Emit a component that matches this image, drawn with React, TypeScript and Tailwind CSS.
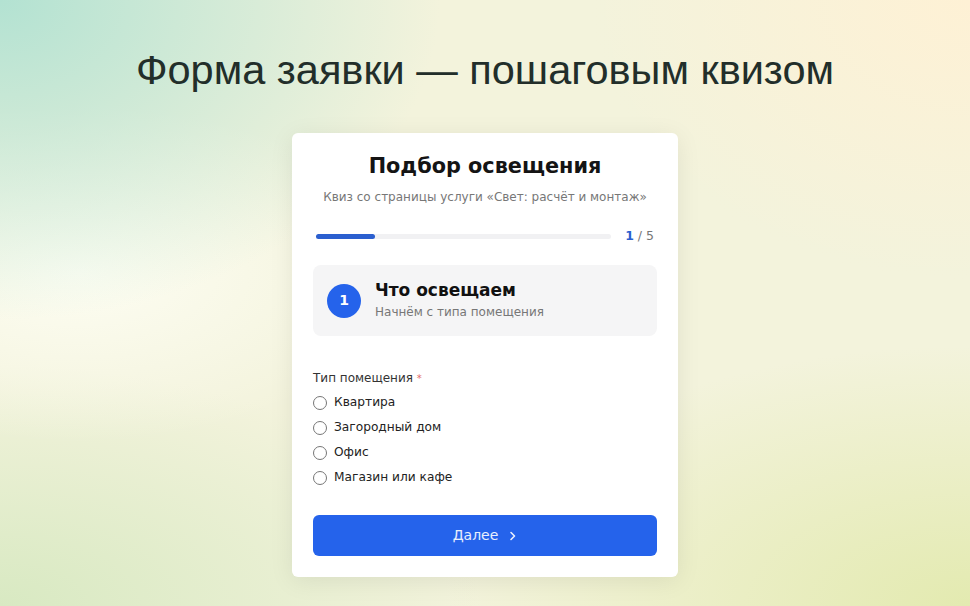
import React, { useState } from 'react';

const options = ['Квартира', 'Загородный дом', 'Офис', 'Магазин или кафе'];

const StepHeader: React.FC<{ num: number; title: string; hint: string }> = ({ num, title, hint }) => (
  <div className="flex items-center gap-[14px] rounded-lg bg-[#f5f5f6] px-[14px] py-[15px]">
    <div className="flex h-[34px] w-[34px] shrink-0 items-center justify-center rounded-full bg-[#2563eb] text-[14px] font-bold text-white">
      {num}
    </div>
    <div className="flex flex-col">
      <span className="text-[17px] font-bold leading-[20px] text-[#111]">{title}</span>
      <span className="mt-[4px] text-[12px] leading-[17px] text-[#777]">{hint}</span>
    </div>
  </div>
);

export default function App() {
  const [selected, setSelected] = useState<string | null>(null);
  const step = 1;
  const total = 5;

  return (
    <div
      className="flex min-h-[606px] w-full flex-col items-center bg-[#f3f3dc] bg-[radial-gradient(ellipse_440px_320px_at_0%_0%,#b3e2d2_0%,rgba(179,226,210,0)_100%),radial-gradient(ellipse_380px_280px_at_100%_0%,#fef1d5_0%,rgba(254,241,213,0)_100%),radial-gradient(ellipse_340px_170px_at_8%_45%,#fdfdf2_0%,rgba(253,253,242,0)_100%),radial-gradient(ellipse_520px_260px_at_100%_100%,#e3eab0_0%,rgba(227,234,176,0)_100%),radial-gradient(ellipse_480px_240px_at_0%_100%,#d8e9c2_0%,rgba(216,233,194,0)_100%)]"
      style={{ fontFamily: '"DejaVu Sans", "Noto Sans", sans-serif' }}
    >
      <h1
        className="mt-[45px] text-[41.5px] font-normal leading-[50px] text-[#222e2a]"
        style={{ fontFamily: '"Liberation Sans", Arial, sans-serif' }}
      >
        Форма заявки — пошаговым квизом
      </h1>

      <div className="mt-[38px] w-[386px] rounded-md bg-white px-[21px] pb-[21px] pt-[20px] shadow-[0_4px_24px_rgba(0,0,0,0.08)]">
        <h2 className="text-center text-[20.8px] font-bold leading-[27px] text-[#141414]">Подбор освещения</h2>
        <p className="mt-[8px] text-center text-[12px] leading-[18px] text-[#777]">
          Квиз со страницы услуги «Свет: расчёт и монтаж»
        </p>

        <div className="mt-[22px] flex items-center gap-[14px] pl-[3px] pr-[3px]">
          <div className="h-[5px] flex-1 rounded-full bg-[#f1f1f3]">
            <div className="h-[5px] rounded-full bg-[#2b5fcf]" style={{ width: `${(step / total) * 100}%` }} />
          </div>
          <span className="text-[12.5px] leading-[16px] text-[#777]">
            <span className="font-bold text-[#2b5fcf]">{step}</span> / {total}
          </span>
        </div>

        <div className="mt-[21px]">
          <StepHeader num={1} title="Что освещаем" hint="Начнём с типа помещения" />
        </div>

        <div className="mt-[33px] text-[12px] leading-[18px] text-[#333]">
          Тип помещения <span className="text-[10px] text-[#e36b6b]">*</span>
        </div>

        <div className="mt-[2px] flex flex-col">
          {options.map((opt) => (
            <label key={opt} className="flex h-[25px] cursor-pointer items-center gap-[7px] text-[12.2px] text-[#222]">
              <span
                onClick={() => setSelected(opt)}
                className={`flex h-[14px] w-[14px] items-center justify-center rounded-full border ${
                  selected === opt ? 'border-[#2563eb]' : 'border-[#767676]'
                }`}
              >
                {selected === opt && <span className="h-[8px] w-[8px] rounded-full bg-[#2563eb]" />}
              </span>
              <span onClick={() => setSelected(opt)}>{opt}</span>
            </label>
          ))}
        </div>

        <button className="mt-[25px] flex h-[41px] w-full items-center justify-center gap-[11px] rounded-md bg-[#2563eb] text-[14px] text-white/90">
          <span>Далее</span>
          <svg width="8" height="10" viewBox="0 0 8 10" fill="none">
            <path d="M2 1.5L5.5 5L2 8.5" stroke="currentColor" strokeWidth="1.6" strokeLinecap="round" strokeLinejoin="round" />
          </svg>
        </button>
      </div>
    </div>
  );
}
